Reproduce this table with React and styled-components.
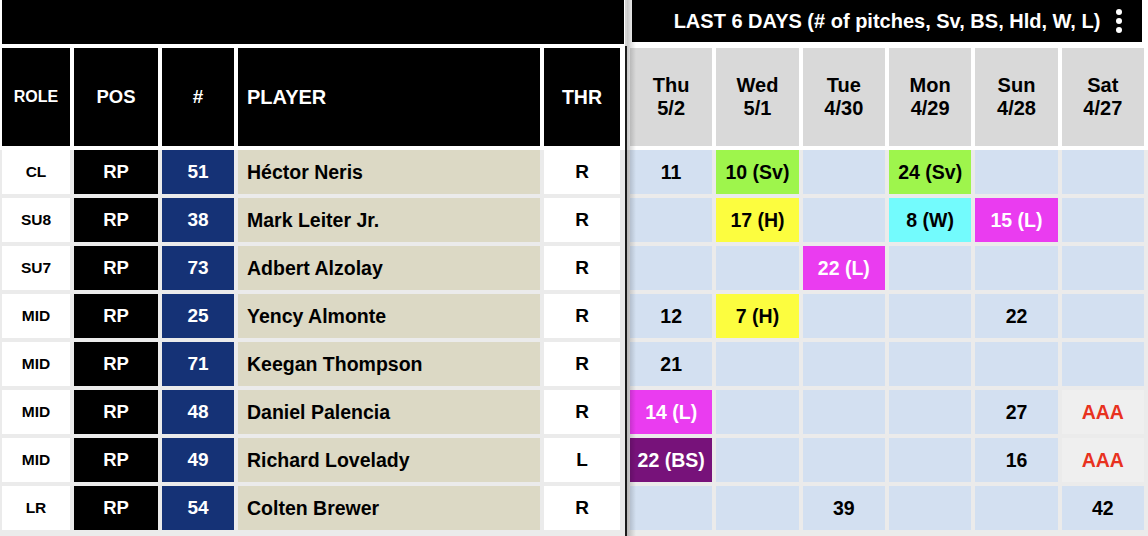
import React from 'react';
import styled, { createGlobalStyle } from 'styled-components';

const GlobalStyle = createGlobalStyle`
  html, body {
    margin: 0;
    padding: 0;
    background: #ffffff;
  }
  body {
    font-family: "Liberation Sans", Arial, sans-serif;
  }
`;

const colors = {
  blue: '#d3e0f1',
  green: '#9ef54c',
  yellow: '#fcfd3f',
  cyan: '#73fbfd',
  magenta: '#ea3cf0',
  purple: '#77127a',
  aaa: '#efefef',
};

const Sheet = styled.div`
  display: flex;
  width: 1148px;
  height: 536px;
  overflow: hidden;
  background: #ffffff;
`;

const LeftPane = styled.div`
  width: 625px;
  display: flex;
  flex-direction: column;
`;

const Divider = styled.div`
  width: 2px;
  background: linear-gradient(to bottom, #d4d4d4 0, #d4d4d4 46px, #1c1c1c 46px);
`;

const RightPane = styled.div`
  position: relative;
  flex: 1;
  display: flex;
  flex-direction: column;

  &::after {
    content: '';
    position: absolute;
    top: 0;
    bottom: 0;
    left: 0;
    width: 9px;
    background: linear-gradient(to right, rgba(0, 0, 0, 0.22), rgba(0, 0, 0, 0));
    pointer-events: none;
  }
`;

const TopBand = styled.div`
  height: ${p => p.$h}px;
  margin: 0 ${p => p.$mr}px 0 ${p => p.$ml}px;
  background: #000000;
  color: #ffffff;
  display: flex;
  align-items: center;
  justify-content: center;
  position: relative;
  font-weight: 700;
  font-size: 20px;
`;

const MoreDots = styled.div`
  position: absolute;
  right: 20px;
  top: 9px;
  display: flex;
  flex-direction: column;
  gap: 3px;

  span {
    width: 6px;
    height: 6px;
    border-radius: 50%;
    background: #ffffff;
  }
`;

const LeftGrid = styled.div`
  display: grid;
  grid-template-columns: 68px 84px 72px 302px 76px;
  column-gap: 4px;
  padding: 0 5px 0 2px;
`;

const RightGrid = styled.div`
  display: grid;
  grid-template-columns: repeat(6, 1fr);
  column-gap: 4px;
  padding: 0 4px 0 3px;
`;

const HeaderRow = styled.div`
  margin-top: ${p => p.$mt}px;
  height: 98px;
  margin-bottom: 4px;
`;

const Body = styled.div`
  flex: 1;
  background: #ebebeb;
  display: flex;
  flex-direction: column;
  gap: 4px;
`;

const BodyRow = styled.div`
  height: 44px;
`;

const HeadCell = styled.div`
  background: ${p => p.$bg || '#000000'};
  color: ${p => p.$fg || '#ffffff'};
  font-weight: 700;
  font-size: ${p => p.$size || 19}px;
  line-height: 1.15;
  display: flex;
  align-items: center;
  justify-content: ${p => (p.$left ? 'flex-start' : 'center')};
  padding-left: ${p => (p.$left ? 9 : 0)}px;
  text-align: center;
`;

const Cell = styled.div`
  background: ${p => p.$bg};
  color: ${p => p.$fg || '#000000'};
  font-weight: 700;
  font-size: ${p => p.$size || 19}px;
  display: flex;
  align-items: center;
  justify-content: ${p => (p.$left ? 'flex-start' : 'center')};
  padding-left: ${p => (p.$left ? 9 : 0)}px;
  white-space: nowrap;
`;

const days = [
  ['Thu', '5/2'],
  ['Wed', '5/1'],
  ['Tue', '4/30'],
  ['Mon', '4/29'],
  ['Sun', '4/28'],
  ['Sat', '4/27'],
];

const G = v => ({ v, c: 'green' });
const Y = v => ({ v, c: 'yellow' });
const C = v => ({ v, c: 'cyan' });
const M = v => ({ v, c: 'magenta', light: true });
const P = v => ({ v, c: 'purple', light: true });
const AAA = { v: 'AAA', c: 'aaa', red: true };

const rows = [
  { role: 'CL', num: 51, name: 'Héctor Neris', thr: 'R', log: ['11', G('10 (Sv)'), '', G('24 (Sv)'), '', ''] },
  { role: 'SU8', num: 38, name: 'Mark Leiter Jr.', thr: 'R', log: ['', Y('17 (H)'), '', C('8 (W)'), M('15 (L)'), ''] },
  { role: 'SU7', num: 73, name: 'Adbert Alzolay', thr: 'R', log: ['', '', M('22 (L)'), '', '', ''] },
  { role: 'MID', num: 25, name: 'Yency Almonte', thr: 'R', log: ['12', Y('7 (H)'), '', '', '22', ''] },
  { role: 'MID', num: 71, name: 'Keegan Thompson', thr: 'R', log: ['21', '', '', '', '', ''] },
  { role: 'MID', num: 48, name: 'Daniel Palencia', thr: 'R', log: [M('14 (L)'), '', '', '', '27', AAA] },
  { role: 'MID', num: 49, name: 'Richard Lovelady', thr: 'L', log: [P('22 (BS)'), '', '', '', '16', AAA] },
  { role: 'LR', num: 54, name: 'Colten Brewer', thr: 'R', log: ['', '', '39', '', '', '42'] },
];

const DayCell = ({ entry }) => {
  const e = typeof entry === 'string' ? { v: entry, c: 'blue' } : entry;
  const fg = e.red ? '#e8321f' : e.light ? '#ffffff' : '#000000';
  return (
    <Cell $bg={colors[e.c]} $fg={fg} $size={19.5}>
      {e.v}
    </Cell>
  );
};

export default function App() {
  return (
    <>
      <GlobalStyle />
      <Sheet>
        <LeftPane>
          <TopBand $h={44} $ml={2} $mr={1} />
          <HeaderRow as={LeftGrid} $mt={4}>
            <HeadCell $size={16}>ROLE</HeadCell>
            <HeadCell $size={18.5}>POS</HeadCell>
            <HeadCell $size={19}>#</HeadCell>
            <HeadCell $size={20} $left>PLAYER</HeadCell>
            <HeadCell $size={19.5}>THR</HeadCell>
          </HeaderRow>
          <Body>
            {rows.map((r, i) => (
              <BodyRow as={LeftGrid} key={i}>
                <Cell $bg="#ffffff" $size={15.5}>{r.role}</Cell>
                <Cell $bg="#000000" $fg="#ffffff" $size={18.5}>RP</Cell>
                <Cell $bg="#153276" $fg="#ffffff" $size={19}>{r.num}</Cell>
                <Cell $bg="#dcd9c5" $size={19.5} $left>{r.name}</Cell>
                <Cell $bg="#ffffff" $size={19}>{r.thr}</Cell>
              </BodyRow>
            ))}
          </Body>
        </LeftPane>
        <Divider />
        <RightPane>
          <TopBand $h={42} $ml={5} $mr={6}>
            LAST 6 DAYS (# of pitches, Sv, BS, Hld, W, L)
            <MoreDots>
              <span />
              <span />
              <span />
            </MoreDots>
          </TopBand>
          <HeaderRow as={RightGrid} $mt={6}>
            {days.map(([d, date]) => (
              <HeadCell key={d} $bg="#d9d9d9" $fg="#000000" $size={20}>
                {d}
                <br />
                {date}
              </HeadCell>
            ))}
          </HeaderRow>
          <Body>
            {rows.map((r, i) => (
              <BodyRow as={RightGrid} key={i}>
                {r.log.map((entry, j) => (
                  <DayCell key={j} entry={entry} />
                ))}
              </BodyRow>
            ))}
          </Body>
        </RightPane>
      </Sheet>
    </>
  );
}
